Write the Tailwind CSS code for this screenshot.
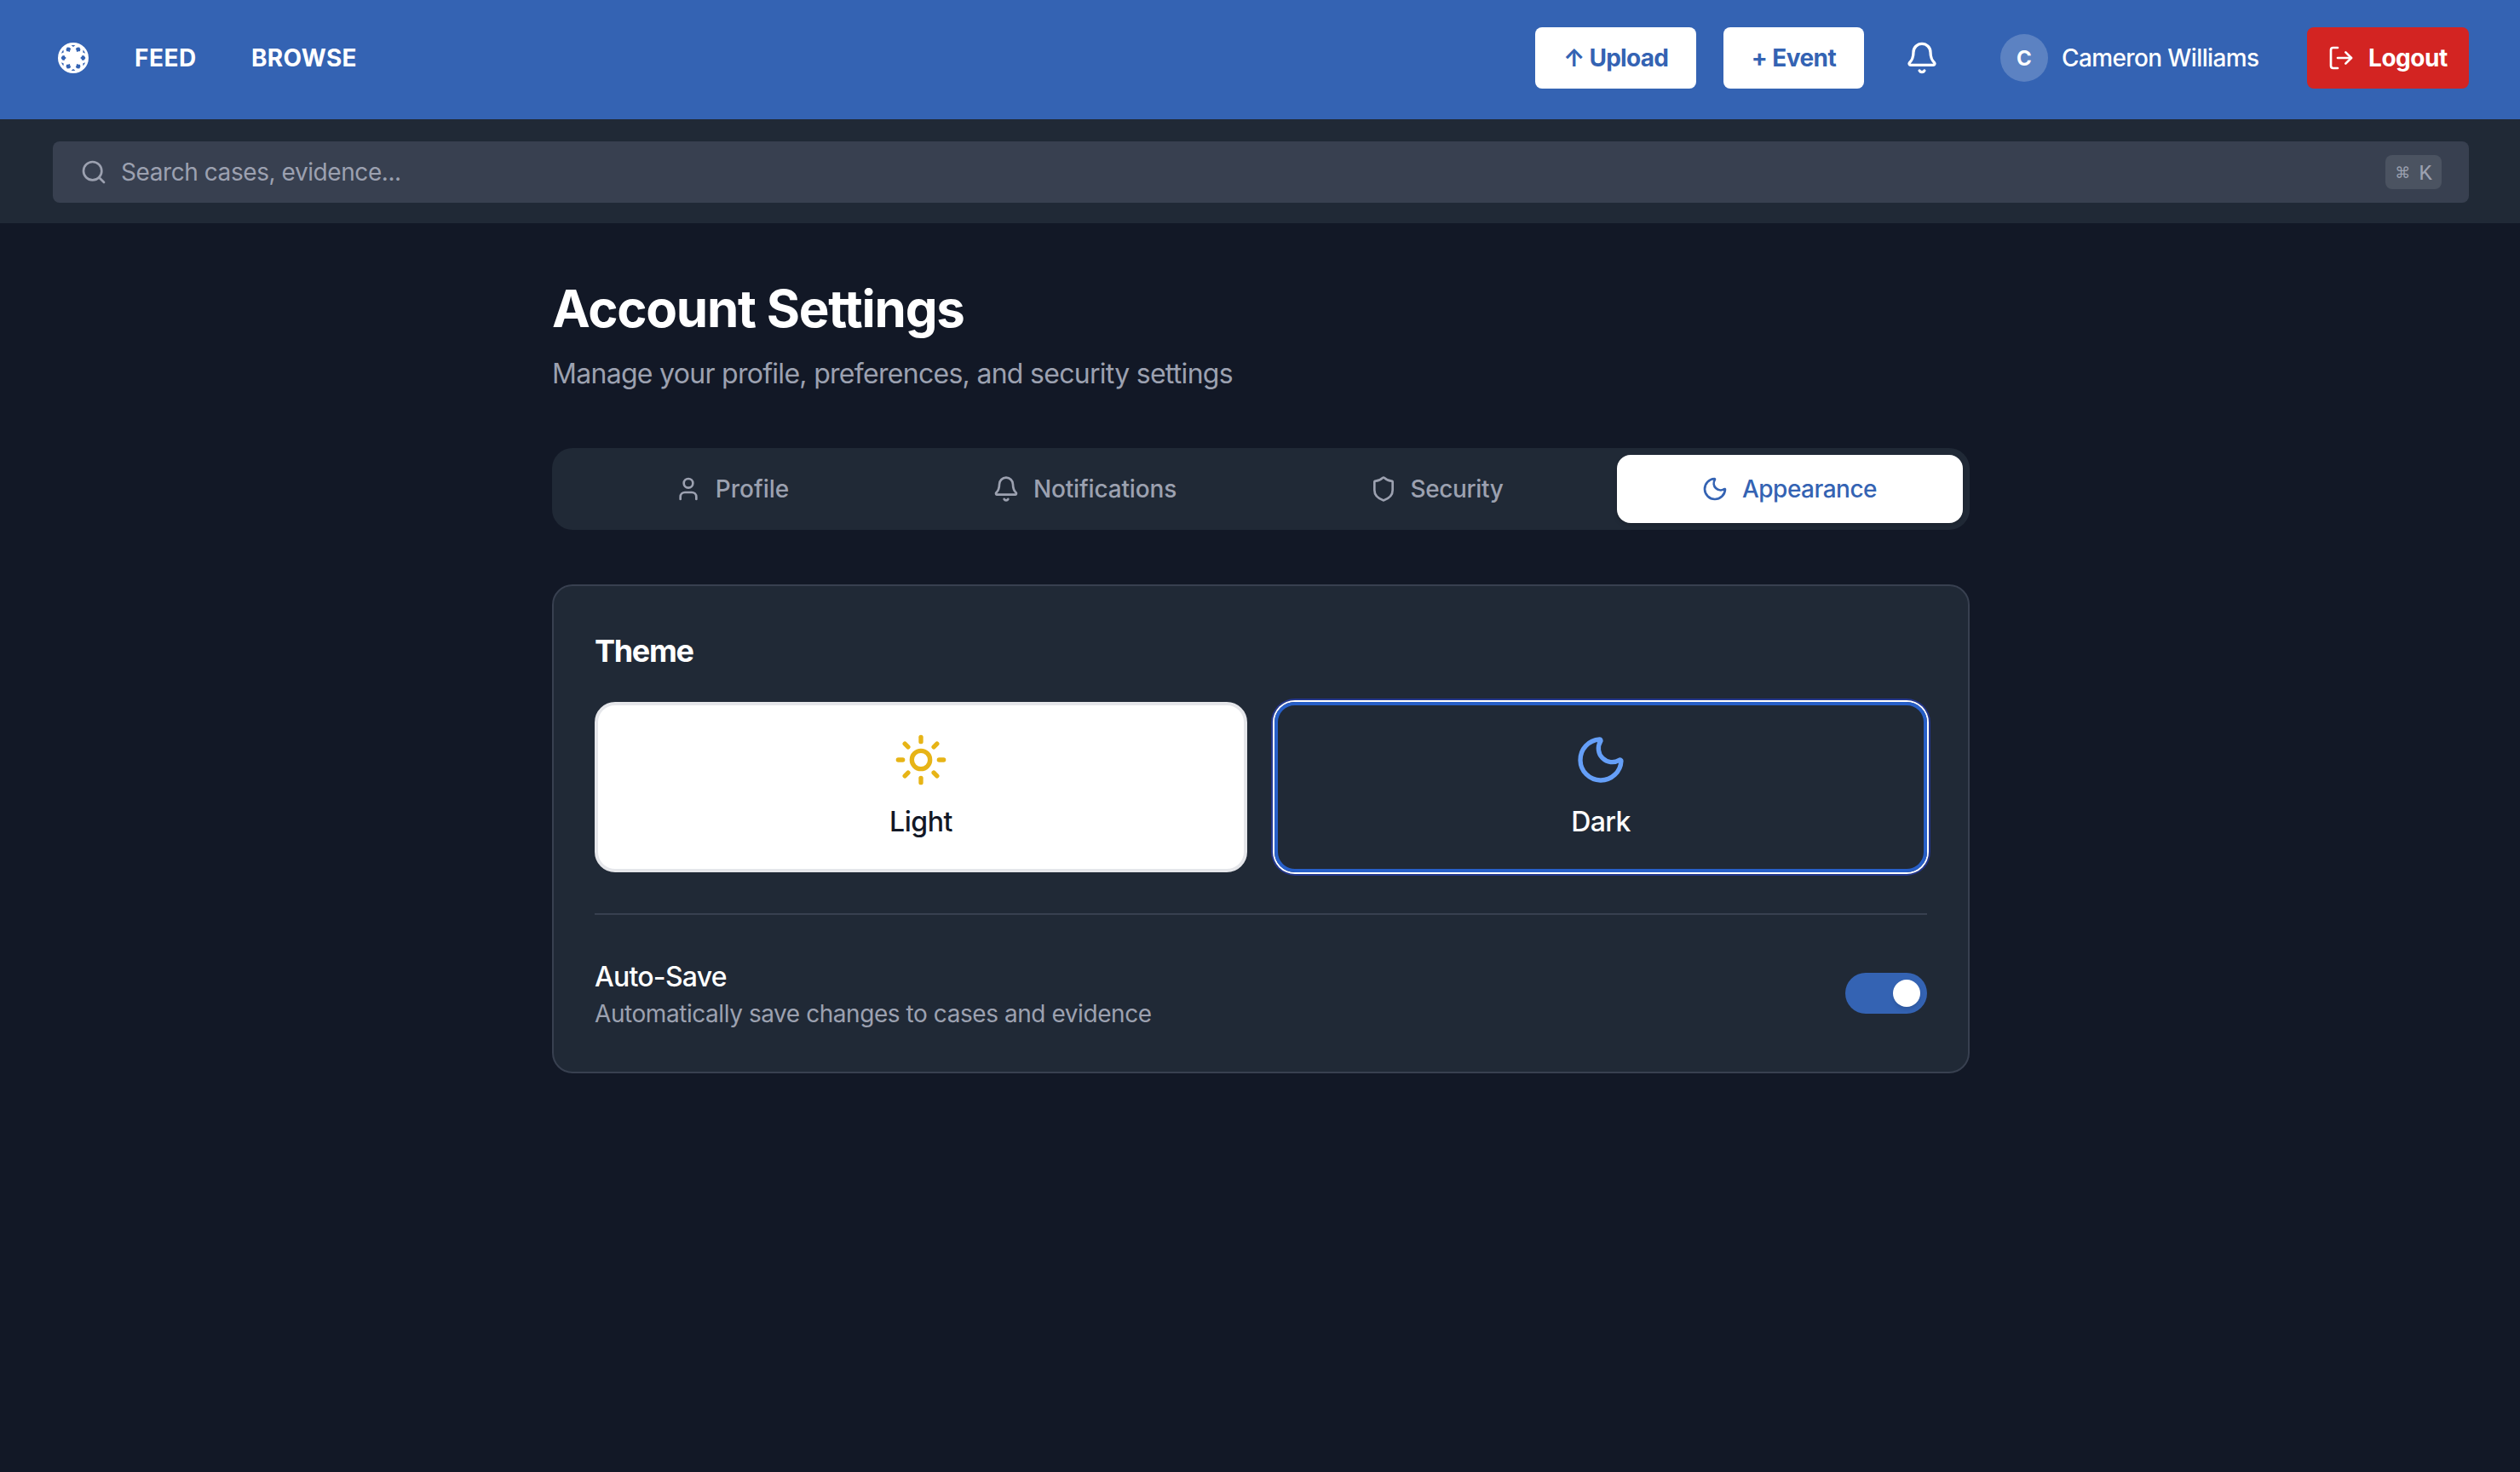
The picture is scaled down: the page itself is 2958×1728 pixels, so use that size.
<!DOCTYPE html>
<html lang="en">
<head>
    <meta charset="UTF-8">
    <meta name="viewport" content="width=device-width, initial-scale=1.0">
    <title>Account Settings</title>
    <!-- Tailwind CSS CDN -->
    <script src="https://cdn.jsdelivr.net/npm/@tailwindcss/browser@4"></script>
</head>
<body class="bg-[#121826] overflow-hidden">
<div class="w-[2960px] min-h-[1728px] font-['Inter',sans-serif] text-[28px] leading-[40px] text-white">

    <!-- Top navigation -->
    <header class="h-[140px] pb-1 px-[62px] bg-[#3463b3] flex items-center justify-between">
        <nav class="flex items-center font-bold">
            <svg class="size-9 ml-1.5" viewBox="-18 -18 36 36">
                <defs>
                    <path id="petal" d="M-14.4 0 -12.8 -2.4 -10.6 -2.9 -9.8 -1.5 -8.2 0 -9.8 1.5 -10.6 2.9 -12.8 2.4z"/>
                    <path id="chip" d="M-14.8 -2.4Q-15.4 0 -14.8 2.4L-13 0z"/>
                </defs>
                <circle r="18" fill="#fff"/>
                <g fill="#3463b3">
                    <use href="#petal"/>
                    <use href="#petal" transform="rotate(60)"/>
                    <use href="#petal" transform="rotate(120)"/>
                    <use href="#petal" transform="rotate(180)"/>
                    <use href="#petal" transform="rotate(240)"/>
                    <use href="#petal" transform="rotate(300)"/>
                    <use href="#chip" transform="rotate(30)"/>
                    <use href="#chip" transform="rotate(90)"/>
                    <use href="#chip" transform="rotate(150)"/>
                    <use href="#chip" transform="rotate(210)"/>
                    <use href="#chip" transform="rotate(270)"/>
                    <use href="#chip" transform="rotate(330)"/>
                </g>
            </svg>
            <a class="ml-[54px] w-[137px] tracking-[0.5px]">FEED</a>
            <a class="tracking-[0.3px]">BROWSE</a>
        </nav>

        <div class="flex items-center">
            <button class="w-[189px] h-[72px] rounded-lg bg-white text-[#3463b3] font-bold tracking-[-0.75px] whitespace-nowrap">↑ Upload</button>
            <button class="ml-8 w-[165px] h-[72px] rounded-lg bg-white text-[#3463b3] font-bold tracking-[-0.55px] whitespace-nowrap">+ Event</button>
            <svg class="size-10 ml-12" viewBox="0 0 24 24" fill="none" stroke="currentColor" stroke-width="2" stroke-linecap="round" stroke-linejoin="round">
                <path d="M10.268 21a2 2 0 0 0 3.464 0"/>
                <path d="M3.262 15.326A1 1 0 0 0 4 17h16a1 1 0 0 0 .74-1.673C19.41 13.956 18 12.499 18 8A6 6 0 0 0 6 8c0 4.499-1.411 5.956-2.738 7.326"/>
            </svg>
            <div class="ml-[72px] size-14 rounded-full bg-white/20 flex items-center justify-center text-2xl font-bold"><span class="translate-y-px">C</span></div>
            <span class="ml-4 w-[288px] font-medium tracking-[-0.62px] whitespace-nowrap">Cameron Williams</span>
            <button class="w-[190px] h-[72px] px-6 rounded-lg bg-[#d32422] font-bold flex items-center gap-4">
                <svg class="size-8 shrink-0" viewBox="0 0 24 24" fill="none" stroke="currentColor" stroke-width="2" stroke-linecap="round" stroke-linejoin="round">
                    <path d="m16 17 5-5-5-5"/>
                    <path d="M21 12H9"/>
                    <path d="M9 21H5a2 2 0 0 1-2-2V5a2 2 0 0 1 2-2h4"/>
                </svg>
                <span class="tracking-[-0.45px]">Logout</span>
            </button>
        </div>
    </header>

    <!-- Search -->
    <div class="h-[122px] px-[62px] pt-[26px] bg-[#202936]">
        <div class="h-[72px] px-8 rounded-lg bg-[#384050] text-[#9ca1b0] flex items-center">
            <svg class="size-8" viewBox="0 0 24 24" fill="none" stroke="currentColor" stroke-width="2" stroke-linecap="round" stroke-linejoin="round">
                <path d="m21 21-4.34-4.34"/>
                <circle cx="11" cy="11" r="8"/>
            </svg>
            <span class="ml-4 tracking-[-0.43px]">Search cases, evidence...</span>
            <kbd class="ml-auto w-[66px] h-10 rounded-lg bg-[#4b5361] flex items-center justify-center gap-[10px] leading-none">
                <span class="font-['DejaVu_Sans'] text-[18px] translate-y-px">⌘</span>
                <span class="font-['Liberation_Mono',monospace] text-[26px] translate-y-0.5">K</span>
            </kbd>
        </div>
    </div>

    <main class="w-[1664px] mx-auto pt-16">
        <h1 class="text-[60px] leading-[72px] font-bold tracking-[-1.25px]">Account Settings</h1>
        <p class="mt-[17px] mb-[63px] text-[32px] leading-[48px] tracking-[-0.71px] text-[#9ca1b0]">Manage your profile, preferences, and security settings</p>

        <!-- Tabs -->
        <div class="h-24 p-2 rounded-3xl bg-[#202936] grid grid-cols-4 gap-2 font-medium text-[#9ca1b0]">
            <button class="flex items-center justify-center gap-4">
                <svg class="size-8" viewBox="0 0 24 24" fill="none" stroke="currentColor" stroke-width="2" stroke-linecap="round" stroke-linejoin="round">
                    <path d="M19 21v-2a4 4 0 0 0-4-4H9a4 4 0 0 0-4 4v2"/>
                    <circle cx="12" cy="7" r="4"/>
                </svg>
                <span>Profile</span>
            </button>
            <button class="flex items-center justify-center gap-4">
                <svg class="size-8" viewBox="0 0 24 24" fill="none" stroke="currentColor" stroke-width="2" stroke-linecap="round" stroke-linejoin="round">
                    <path d="M10.268 21a2 2 0 0 0 3.464 0"/>
                    <path d="M3.262 15.326A1 1 0 0 0 4 17h16a1 1 0 0 0 .74-1.673C19.41 13.956 18 12.499 18 8A6 6 0 0 0 6 8c0 4.499-1.411 5.956-2.738 7.326"/>
                </svg>
                <span class="tracking-[-0.16px]">Notifications</span>
            </button>
            <button class="pr-0.5 flex items-center justify-center gap-4">
                <svg class="size-8" viewBox="0 0 24 24" fill="none" stroke="currentColor" stroke-width="2" stroke-linecap="round" stroke-linejoin="round">
                    <path d="M20 13c0 5-3.5 7.5-7.66 8.95a1 1 0 0 1-.67-.01C7.5 20.5 4 18 4 13V6a1 1 0 0 1 1-1c2 0 4.5-1.2 6.24-2.72a1.17 1.17 0 0 1 1.52 0C14.51 3.81 17 5 19 5a1 1 0 0 1 1 1z"/>
                </svg>
                <span class="tracking-[-0.4px]">Security</span>
            </button>
            <button class="pr-0.5 flex items-center justify-center gap-4 rounded-2xl bg-white text-[#3463b3] shadow-md">
                <svg class="size-8" viewBox="0 0 24 24" fill="none" stroke="currentColor" stroke-width="2" stroke-linecap="round" stroke-linejoin="round">
                    <path d="M20.985 12.486a9 9 0 1 1-9.473-9.472c.405-.022.617.46.402.803a6 6 0 0 0 8.268 8.268c.344-.215.825-.004.803.401"/>
                </svg>
                <span class="tracking-[-0.5px]">Appearance</span>
            </button>
        </div>

        <!-- Appearance panel -->
        <section class="mt-16 p-12 rounded-3xl border-2 border-[#384050] bg-[#202936]">
            <h2 class="text-[36px] leading-[56px] font-bold tracking-[-1.3px]">Theme</h2>

            <div class="mt-8 grid grid-cols-2 gap-8 text-[32px] leading-[48px] font-medium">
                <button class="h-[200px] rounded-3xl border-4 border-[#e5e6ea] bg-white text-[#121826] flex flex-col items-center justify-center gap-4">
                    <svg class="size-16 text-[#e7b416]" viewBox="0 0 24 24" fill="none" stroke="currentColor" stroke-width="2" stroke-linecap="round" stroke-linejoin="round">
                        <circle cx="12" cy="12" r="4"/>
                        <path d="M12 2v2"/>
                        <path d="M12 20v2"/>
                        <path d="m4.93 4.93 1.41 1.41"/>
                        <path d="m17.66 17.66 1.41 1.41"/>
                        <path d="M2 12h2"/>
                        <path d="M20 12h2"/>
                        <path d="m6.34 17.66-1.41 1.41"/>
                        <path d="m19.07 4.93-1.41 1.41"/>
                    </svg>
                    <span class="tracking-[-0.47px] translate-y-px">Light</span>
                </button>
                <button class="h-[200px] rounded-3xl border-4 border-[#275fc8] shadow-[0_0_0_2px_#ffffff,0_0_0_4px_#24368a] flex flex-col items-center justify-center gap-4">
                    <svg class="size-16 text-[#659ff8]" viewBox="0 0 24 24" fill="none" stroke="currentColor" stroke-width="2" stroke-linecap="round" stroke-linejoin="round">
                        <path d="M20.985 12.486a9 9 0 1 1-9.473-9.472c.405-.022.617.46.402.803a6 6 0 0 0 8.268 8.268c.344-.215.825-.004.803.401"/>
                    </svg>
                    <span class="tracking-[-0.67px] translate-y-px">Dark</span>
                </button>
            </div>

            <div class="mt-12 pt-12 border-t-2 border-[#384050] flex items-center justify-between">
                <div>
                    <h3 class="text-[32px] leading-[48px] font-medium tracking-[-0.75px] translate-y-px">Auto-Save</h3>
                    <p class="tracking-[-0.44px] text-[#9ca1b0]">Automatically save changes to cases and evidence</p>
                </div>
                <button class="w-24 h-12 p-2 rounded-full bg-[#3463b3] flex justify-end">
                    <span class="size-8 rounded-full bg-white shadow-md"></span>
                </button>
            </div>
        </section>
    </main>
</div>
</body>
</html>
